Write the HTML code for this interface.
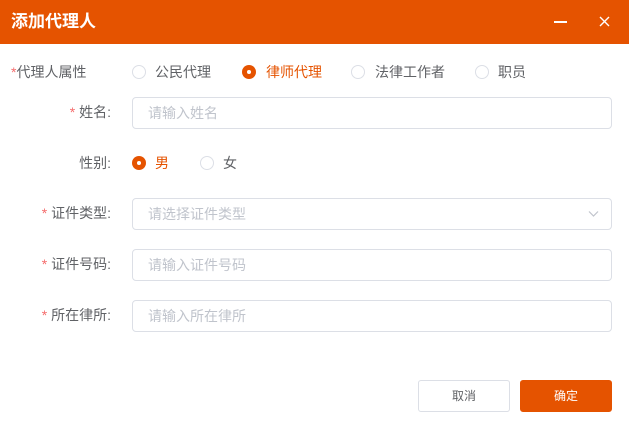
<!DOCTYPE html>
<html><head><meta charset="utf-8"><style>
*{margin:0;padding:0;box-sizing:border-box}
body{width:629px;height:434px;background:#fff;font-family:"Liberation Sans","Noto Sans CJK SC",sans-serif;font-size:14px;color:#606266;position:relative;overflow:hidden}
.hd{position:absolute;left:0;top:0;width:629px;height:44px;background:#e55300}
.t{position:absolute;left:11px;top:10px;color:#fff;font-size:17px;font-weight:bold;line-height:24px}
.a{position:absolute;white-space:nowrap;line-height:16px}
.r{position:absolute;width:14px;height:14px;border:1px solid #dcdfe6;border-radius:50%;background:#fff}
.r.on{border:none;background:#e55300}
.r.on:after{content:"";position:absolute;left:5px;top:5px;width:4px;height:4px;border-radius:50%;background:#fff}
.in{position:absolute;left:132px;width:480px;height:32px;border:1px solid #dcdfe6;border-radius:4px;color:#c0c4cc;padding-left:15px;line-height:30px}
.st{color:#f56c6c}
.lb{position:absolute;right:518px;white-space:nowrap;line-height:16px}
.btn{position:absolute;top:380px;width:92px;height:32px;border-radius:3px;text-align:center;line-height:30px;font-size:12px}
</style></head><body>
<div class="hd"><div class="t">添加代理人</div>
<div style="position:absolute;left:554px;top:21px;width:13px;height:1.5px;background:#fff"></div>
<svg style="position:absolute;left:599px;top:16px" width="11" height="11"><path d="M1 1L10 10M10 1L1 10" stroke="#fff" stroke-width="1.4"/></svg>
</div>
<div class="a" style="left:11px;top:64px"><span class="st">*</span>代理人属性</div>
<div class="r" style="left:132px;top:65px"></div><div class="a" style="left:155px;top:64px">公民代理</div>
<div class="r on" style="left:242px;top:65px"></div><div class="a" style="left:266px;top:64px;color:#e55300">律师代理</div>
<div class="r" style="left:351px;top:65px"></div><div class="a" style="left:375px;top:64px">法律工作者</div>
<div class="r" style="left:475px;top:65px"></div><div class="a" style="left:498px;top:64px">职员</div>

<div class="lb" style="top:104px"><span class="st">*</span> 姓名:</div>
<div class="in" style="top:97px">请输入姓名</div>

<div class="lb" style="top:155px">性别:</div>
<div class="r on" style="left:132px;top:156px"></div><div class="a" style="left:155px;top:155px;color:#e55300">男</div>
<div class="r" style="left:200px;top:156px"></div><div class="a" style="left:223px;top:155px">女</div>

<div class="lb" style="top:205px"><span class="st">*</span> 证件类型:</div>
<div class="in" style="top:198px">请选择证件类型
<svg style="position:absolute;right:12px;top:11px" width="11" height="8"><path d="M1 1.5L5.5 6L10 1.5" stroke="#c0c4cc" fill="none" stroke-width="1.2"/></svg></div>

<div class="lb" style="top:256px"><span class="st">*</span> 证件号码:</div>
<div class="in" style="top:249px">请输入证件号码</div>

<div class="lb" style="top:307px"><span class="st">*</span> 所在律所:</div>
<div class="in" style="top:300px">请输入所在律所</div>

<div class="btn" style="left:418px;border:1px solid #dcdfe6;color:#606266">取消</div>
<div class="btn" style="left:520px;background:#e55300;color:#fff;border:1px solid #e55300">确定</div>
</body></html>
